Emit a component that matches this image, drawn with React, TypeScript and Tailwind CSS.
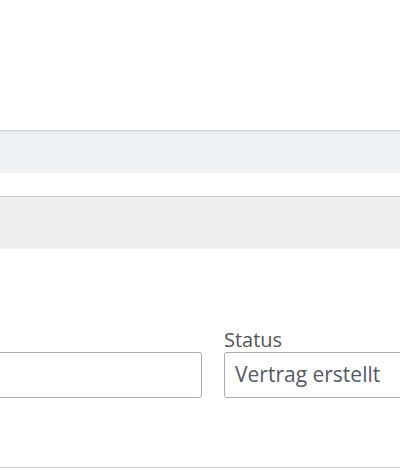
export default function App() {
  return (
    <div className="h-[470px] w-[400px] overflow-hidden bg-white font-['Open_Sans',sans-serif] text-[#555]">
      <div className="h-[130px]" />
      <div className="h-[43px] bg-[#eef2f5] shadow-[inset_0_3px_3px_-2px_rgba(0,0,0,0.16)]" />
      <div className="h-[23px]" />
      <div className="h-[53px] border-t border-[#c9c6cc] bg-[#efefef]" />
      <div className="h-[78px]" />
      <div className="flex gap-[22px]">
        <div className="-ml-[98px] flex w-[300px] shrink-0 flex-col">
          <label className="invisible h-[25px] text-[20px] leading-[25px]">Kunde</label>
          <div className="h-[46px] rounded-[3px] border border-[#aaa] bg-white" />
        </div>
        <div className="flex w-[300px] shrink-0 flex-col">
          <label className="h-[25px] text-[20px] leading-[25px]">Status</label>
          <div className="flex h-[46px] items-center rounded-[3px] border border-[#aaa] bg-white px-[10px] text-[21px] text-[#555a66]">
            Vertrag erstellt
          </div>
        </div>
      </div>
      <div className="h-[69px]" />
      <div className="border-t border-[#ccc]" />
    </div>
  );
}
